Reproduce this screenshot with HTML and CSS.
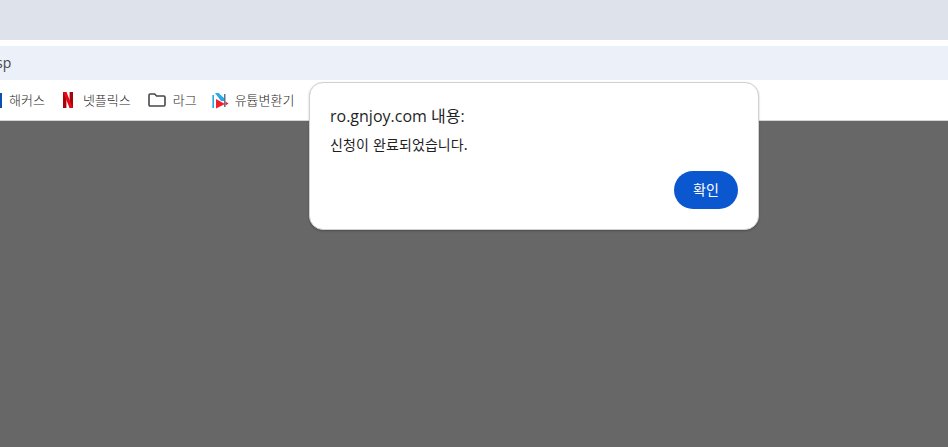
FILE: index.html
```html
<!DOCTYPE html>
<html lang="ko">
<head>
    <meta charset="UTF-8">
    <title>ro.gnjoy.com</title>
    <link rel="stylesheet" href="styles.css">
</head>
<body>

    <div class="tabstrip"></div>

    <div class="toolbar">
        <div class="address">sp</div>
    </div>

    <div class="bookmarks">
        <div class="bookmark bm-hackers">
            <span class="blue-mark"></span>
            <span class="bm-label">해커스</span>
        </div>
        <div class="bookmark bm-netflix">
            <svg width="12" height="16" viewBox="0 0 12 16">
                <path d="M1 0h3.400v16H1z" fill="#a5060e"/>
                <path d="M7.600 0H11v16H7.600z" fill="#a5060e"/>
                <path d="M1 0h3.400L11 16H7.600z" fill="#e50914"/>
            </svg>
            <span class="bm-label">넷플릭스</span>
        </div>
        <div class="bookmark bm-folder">
            <svg width="18" height="14" viewBox="0 0 18 14">
                <path d="M1 2.200C1 1.500 1.500 1 2.200 1h4.400l2 2h7.200c.7 0 1.200.5 1.200 1.200v7.600c0 .7-.5 1.200-1.200 1.200H2.200C1.500 13 1 12.500 1 11.800z" fill="none" stroke="#474747" stroke-width="1.600"/>
            </svg>
            <span class="bm-label">라그</span>
        </div>
        <div class="bookmark bm-youtube">
            <svg width="17" height="17" viewBox="0 0 17 17">
                <path d="M1.200 3v13" stroke="#29a8e8" stroke-width="1.600" fill="none"/>
                <path d="M3 1h3.500l5.500 5v3H9z" fill="#29a8e8"/>
                <path d="M12.800 2v13" stroke="#35506f" stroke-width="1.200" fill="none"/>
                <path d="M4 7l9 5-9 4.500z" fill="#f0202c"/>
                <path d="M13.500 9.500l3 2-3 2z" fill="#f0202c"/>
            </svg>
            <span class="bm-label">유튭변환기</span>
        </div>
    </div>

    <div class="page">
        <div class="dialog">
            <div class="dialog-title">ro.gnjoy.com 내용:</div>
            <div class="dialog-message">신청이 완료되었습니다.</div>
            <div class="dialog-actions">
                <button class="ok-button">확인</button>
            </div>
        </div>
    </div>

</body>
</html>
```

FILE: styles.css
```css
html, body {
    height: 100%;
}
body {
    margin: 0;
    overflow: hidden;
    display: flex;
    flex-direction: column;
    background-color: #ffffff;
    font-family: "Noto Sans CJK KR", "Liberation Sans", sans-serif;
    color: #1f1f1f;
}
.tabstrip {
    height: 40px;
    background-color: #dee3eb;
}
.toolbar {
    height: 34px;
    margin-top: 6px;
    background-color: #ebf0f9;
    display: flex;
    align-items: center;
}
.address {
    margin-left: -4px;
    padding-bottom: 2px;
    font-family: "Open Sans", "Liberation Sans", sans-serif;
    font-size: 14px;
    color: #474747;
}
.bookmarks {
    height: 40px;
    border-bottom: 1px solid #d5d5d5;
    display: flex;
    align-items: center;
    font-size: 13px;
    font-weight: 300;
    color: #1f1f1f;
}
.bookmark {
    display: flex;
    align-items: center;
    gap: 8px;
}
.bm-label {
    padding-bottom: 2px;
}
.bm-hackers { gap: 7px; }
.blue-mark {
    width: 2px;
    height: 15px;
    background-color: #0d4fb0;
}
.bm-netflix { margin-left: 17px; gap: 9px; }
.bm-folder { margin-left: 17px; gap: 7px; }
.bm-youtube { margin-left: 15px; gap: 6px; }
.page {
    flex: 1;
    background-color: #676767;
    position: relative;
}
.dialog {
    position: absolute;
    left: 309px;
    top: -39px;
    width: 450px;
    height: 148px;
    box-sizing: border-box;
    padding: 20px;
    background-color: #ffffff;
    border: 1px solid #d0d0d0;
    border-radius: 14px;
    box-shadow: 0 1px 2px rgba(0, 0, 0, 0.25);
    display: flex;
    flex-direction: column;
}
.dialog-title {
    font-family: "Open Sans", "Noto Sans CJK KR", sans-serif;
    font-size: 16px;
    line-height: 24px;
    margin-top: 1px;
}
.dialog-message {
    margin-top: 6px;
    font-size: 14px;
    line-height: 20px;
    letter-spacing: 0.1px;
}
.dialog-actions {
    margin-top: auto;
    display: flex;
    justify-content: flex-end;
}
.ok-button {
    width: 64px;
    height: 38px;
    border: none;
    border-radius: 19px;
    background-color: #0b57d0;
    color: #ffffff;
    font-family: inherit;
    font-size: 14px;
    padding: 0 0 2px;
}
```
